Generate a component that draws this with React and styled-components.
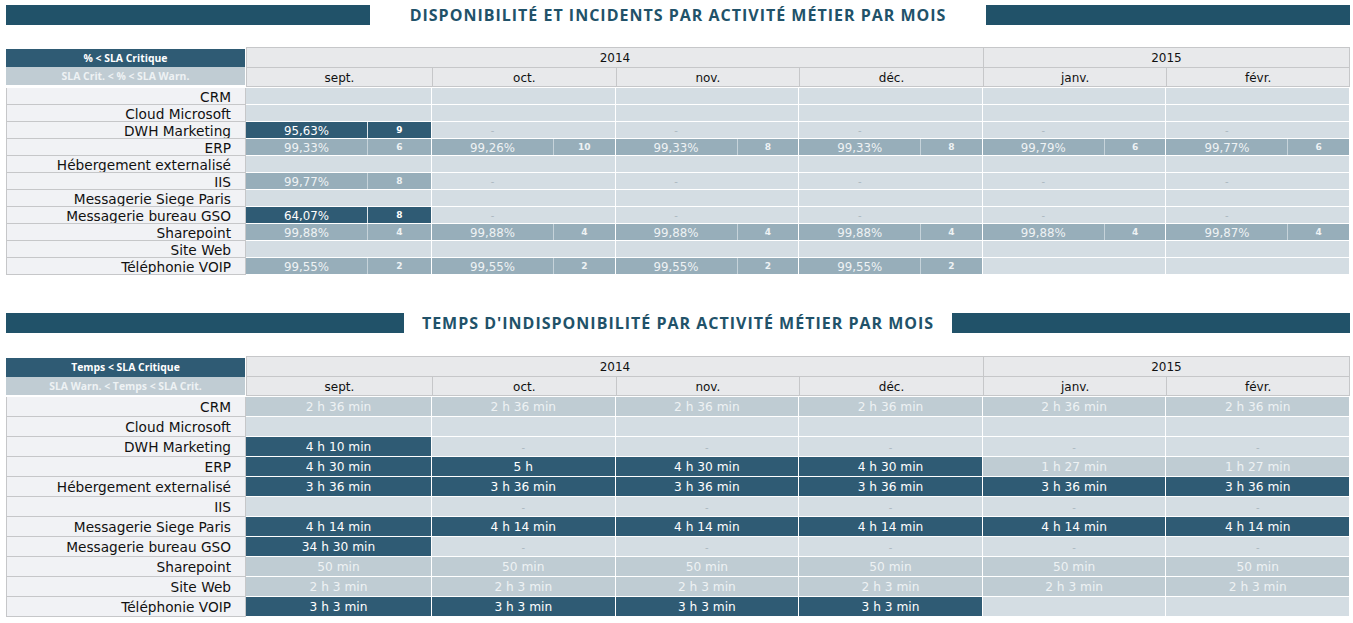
import React from "react";
import styled, { createGlobalStyle } from "styled-components";

const GlobalStyle = createGlobalStyle`
  body {
    margin: 0;
    background: #fff;
    font-family: "DejaVu Sans", Verdana, sans-serif;
  }
`;

const Page = styled.div`
  padding: 5px 3px 0 6px;
`;

const Section = styled.section`
  margin-bottom: ${(p) => p.$after}px;
`;

const TitleRow = styled.div`
  display: flex;
  align-items: center;
  height: 20px;
  gap: ${(p) => p.$gap}px;
`;

const TitleBar = styled.div`
  flex: 1;
  height: 20px;
  background: #215269;
`;

const Title = styled.h2`
  margin: 0;
  font-family: "Open Sans", "Liberation Sans", sans-serif;
  font-weight: 700;
  font-size: 16px;
  letter-spacing: 1px;
  color: #215269;
  white-space: nowrap;
`;

const Table = styled.div`
  display: grid;
  grid-template-columns: 240px 186px repeat(5, 1fr);
  grid-template-rows: 21px 20px;
  grid-auto-rows: ${(p) => p.$rowH}px;
  margin-top: ${(p) => p.$top}px;
`;

const Legend = styled.div`
  grid-column: 1;
  grid-row: 1 / span 2;
  display: flex;
  flex-direction: column;
  margin: 2px 1px 0 0;
  height: ${(p) => p.$h}px;
  font-family: "Open Sans", "Liberation Sans", sans-serif;
  font-weight: 700;
  font-size: 10.4px;
`;

const LegendTop = styled.div`
  flex: 1;
  background: #2f5b74;
  color: #fff;
  display: flex;
  align-items: center;
  justify-content: center;
`;

const LegendBottom = styled.div`
  flex: 1;
  background: #c0ccd3;
  color: #eef2f4;
  display: flex;
  align-items: center;
  justify-content: center;
`;

const HeadCell = styled.div`
  background: #e8e9eb;
  border-left: 1px solid #c6c7c9;
  border-bottom: 1px solid #c6c7c9;
  border-top: ${(p) => (p.$year ? "1px solid #c6c7c9" : "none")};
  border-right: ${(p) => (p.$last ? "1px solid #c6c7c9" : "none")};
  grid-column: ${(p) => p.$span || "auto"};
  margin-bottom: ${(p) => (p.$year ? 0 : 1)}px;
  font-size: 12px;
  color: #111;
  display: flex;
  align-items: center;
  justify-content: center;
  padding-top: 1px;
`;

const Label = styled.div`
  grid-column: 1;
  background: #f1f2f5;
  border-left: 1px solid #c6c7c9;
  border-right: 1px solid #c6c7c9;
  border-bottom: 1px solid #c6c7c9;
  font-size: 13.7px;
  color: #111;
  display: flex;
  align-items: center;
  justify-content: flex-end;
  padding: 1px 14px 0 0;
  white-space: nowrap;
  overflow: hidden;
`;

const bg = {
  dark: "#2f5b74",
  warn: "#97aeba",
  light: "#bfccd3",
  empty: "#d4dde3",
};

const Cell = styled.div`
  background: ${(p) => bg[p.$kind]};
  border-right: 1px solid #fff;
  border-bottom: 1px solid #fff;
  color: ${(p) => (p.$kind === "dark" ? "#fff" : "#eef2f4")};
  font-size: 12.2px;
  display: ${(p) => (p.$split ? "grid" : "flex")};
  grid-template-columns: 121px 1fr;
  align-items: center;
  justify-content: center;
  white-space: nowrap;
  padding-top: 1px;
`;

const Pct = styled.span`
  text-align: center;
  font-size: 11.8px;
`;

const Count = styled.span`
  align-self: stretch;
  display: flex;
  align-items: center;
  justify-content: center;
  border-left: 1px solid ${(p) => (p.$kind === "dark" ? "#dfe6ea" : "#c6d3da")};
  margin-top: -1px;
  font-size: 9px;
  font-weight: 700;
`;

const Dash = styled.span`
  text-align: center;
  color: #acb8c0;
  font-size: 10px;
`;

const months = ["sept.", "oct.", "nov.", "déc.", "janv.", "févr."];

const availability = [
  ["CRM", [null, null, null, null, null, null]],
  ["Cloud Microsoft", [null, null, null, null, null, null]],
  ["DWH Marketing", [["dark", "95,63%", 9], "-", "-", "-", "-", "-"]],
  [
    "ERP",
    [
      ["warn", "99,33%", 6],
      ["warn", "99,26%", 10],
      ["warn", "99,33%", 8],
      ["warn", "99,33%", 8],
      ["warn", "99,79%", 6],
      ["warn", "99,77%", 6],
    ],
  ],
  ["Hébergement externalisé", [null, null, null, null, null, null]],
  ["IIS", [["warn", "99,77%", 8], "-", "-", "-", "-", "-"]],
  ["Messagerie Siege Paris", [null, null, null, null, null, null]],
  ["Messagerie bureau GSO", [["dark", "64,07%", 8], "-", "-", "-", "-", "-"]],
  [
    "Sharepoint",
    [
      ["warn", "99,88%", 4],
      ["warn", "99,88%", 4],
      ["warn", "99,88%", 4],
      ["warn", "99,88%", 4],
      ["warn", "99,88%", 4],
      ["warn", "99,87%", 4],
    ],
  ],
  ["Site Web", [null, null, null, null, null, null]],
  [
    "Téléphonie VOIP",
    [
      ["warn", "99,55%", 2],
      ["warn", "99,55%", 2],
      ["warn", "99,55%", 2],
      ["warn", "99,55%", 2],
      null,
      null,
    ],
  ],
];

const L = (v) => ["light", v];
const D = (v) => ["dark", v];

const downtime = [
  ["CRM", Array(6).fill(L("2 h 36 min"))],
  ["Cloud Microsoft", [null, null, null, null, null, null]],
  ["DWH Marketing", [D("4 h 10 min"), "-", "-", "-", "-", "-"]],
  [
    "ERP",
    [D("4 h 30 min"), D("5 h"), D("4 h 30 min"), D("4 h 30 min"), L("1 h 27 min"), L("1 h 27 min")],
  ],
  ["Hébergement externalisé", Array(6).fill(D("3 h 36 min"))],
  ["IIS", [null, "-", "-", "-", "-", "-"]],
  ["Messagerie Siege Paris", Array(6).fill(D("4 h 14 min"))],
  ["Messagerie bureau GSO", [D("34 h 30 min"), "-", "-", "-", "-", "-"]],
  ["Sharepoint", Array(6).fill(L("50 min"))],
  ["Site Web", Array(6).fill(L("2 h 3 min"))],
  ["Téléphonie VOIP", [D("3 h 3 min"), D("3 h 3 min"), D("3 h 3 min"), D("3 h 3 min"), null, null]],
];

const Header = ({ top, bottom, legendH }) => (
  <>
    <Legend $h={legendH}>
      <LegendTop>{top}</LegendTop>
      <LegendBottom>{bottom}</LegendBottom>
    </Legend>
    <HeadCell $year $span="span 4">2014</HeadCell>
    <HeadCell $year $last $span="span 2">2015</HeadCell>
    {months.map((m, i) => (
      <HeadCell key={m} $last={i === 5}>
        {m}
      </HeadCell>
    ))}
  </>
);

const AvailCell = ({ value }) => {
  if (!value) return <Cell $kind="empty" />;
  if (value === "-")
    return (
      <Cell $kind="empty" $split>
        <Dash>-</Dash>
      </Cell>
    );
  const [kind, pct, n] = value;
  return (
    <Cell $kind={kind} $split>
      <Pct>{pct}</Pct>
      <Count $kind={kind}>{n}</Count>
    </Cell>
  );
};

const TimeCell = ({ value }) => {
  if (!value) return <Cell $kind="empty" />;
  if (value === "-")
    return (
      <Cell $kind="empty">
        <Dash>-</Dash>
      </Cell>
    );
  return <Cell $kind={value[0]}>{value[1]}</Cell>;
};

const App = () => (
  <Page>
    <GlobalStyle />
    <Section $after={38}>
      <TitleRow $gap={40}>
        <TitleBar />
        <Title>DISPONIBILITÉ ET INCIDENTS PAR ACTIVITÉ MÉTIER PAR MOIS</Title>
        <TitleBar />
      </TitleRow>
      <Table $rowH={17} $top={22}>
        <Header top="% < SLA Critique" bottom="SLA Crit. < % < SLA Warn." legendH={36} />
        {availability.map(([label, cells]) => (
          <React.Fragment key={label}>
            <Label>{label}</Label>
            {cells.map((c, i) => (
              <AvailCell key={i} value={c} />
            ))}
          </React.Fragment>
        ))}
      </Table>
    </Section>
    <Section $after={0}>
      <TitleRow $gap={18}>
        <TitleBar />
        <Title>TEMPS D'INDISPONIBILITÉ PAR ACTIVITÉ MÉTIER PAR MOIS</Title>
        <TitleBar />
      </TitleRow>
      <Table $rowH={20} $top={23}>
        <Header top="Temps < SLA Critique" bottom="SLA Warn. < Temps < SLA Crit." legendH={37} />
        {downtime.map(([label, cells]) => (
          <React.Fragment key={label}>
            <Label>{label}</Label>
            {cells.map((c, i) => (
              <TimeCell key={i} value={c} />
            ))}
          </React.Fragment>
        ))}
      </Table>
    </Section>
  </Page>
);

export default App;
